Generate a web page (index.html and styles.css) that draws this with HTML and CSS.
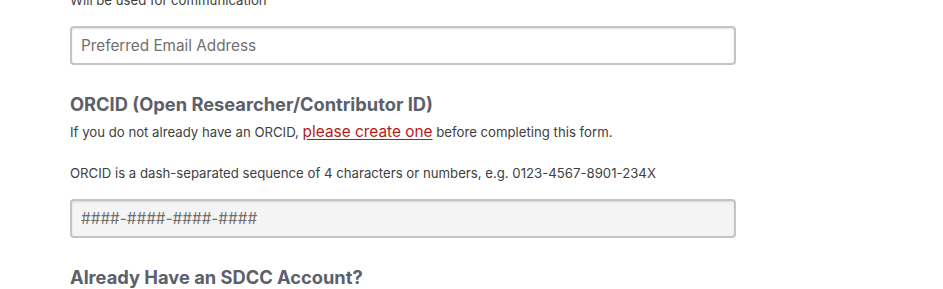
FILE: index.html
```html
<!DOCTYPE html>
<html>
<head>
<meta charset="utf-8">
<link rel="stylesheet" href="styles.css">
</head>
<body>
<div class="form">
  <p class="hint top-hint">Will be used for communication</p>
  <input class="field" type="text" placeholder="Preferred Email Address">
  <h3 class="section-title">ORCID (Open Researcher/Contributor ID)</h3>
  <p class="hint">If you do not already have an ORCID, <a class="link" href="#">please create one</a> before completing this form.</p>
  <p class="hint spaced">ORCID is a dash-separated sequence of 4 characters or numbers, e.g. 0123-4567-8901-234X</p>
  <input class="field field-muted" type="text" placeholder="####-####-####-####">
  <h3 class="section-title">Already Have an SDCC Account?</h3>
</div>
</body>
</html>
```
FILE: styles.css
```css
html, body {
  margin: 0;
  padding: 0;
  background: #ffffff;
}
body {
  font-family: Inter, "Liberation Sans", sans-serif;
  overflow: hidden;
}
.form {
  width: 666px;
  margin-left: 70px;
  margin-top: -9px;
  display: flex;
  flex-direction: column;
}
.hint {
  margin: 0;
  font-size: 13.2px;
  line-height: 18px;
  color: #404040;
}
.top-hint {
  margin-bottom: 17px;
}
.spaced {
  margin-top: 23px;
}
.field {
  box-sizing: border-box;
  width: 666px;
  height: 39px;
  border: 2px solid #c4c4c4;
  border-radius: 4px;
  box-shadow: inset 0 1px 2px rgba(0,0,0,0.12);
  padding: 0 9px;
  font-family: Inter, "Liberation Sans", sans-serif;
  font-size: 15.3px;
  background: #fff;
  outline: none;
}
.field::placeholder {
  color: #6f6f6f;
}
.field-muted {
  margin-top: 17px;
  background: #f4f4f4;
}
.section-title {
  margin: 28px 0 8px;
  font-size: 18.3px;
  font-weight: 700;
  color: #5b606b;
  line-height: 22px;
}
.link {
  color: #b31b1b;
  font-size: 15.4px;
  text-decoration: underline;
  text-underline-offset: 2px;
}
```
